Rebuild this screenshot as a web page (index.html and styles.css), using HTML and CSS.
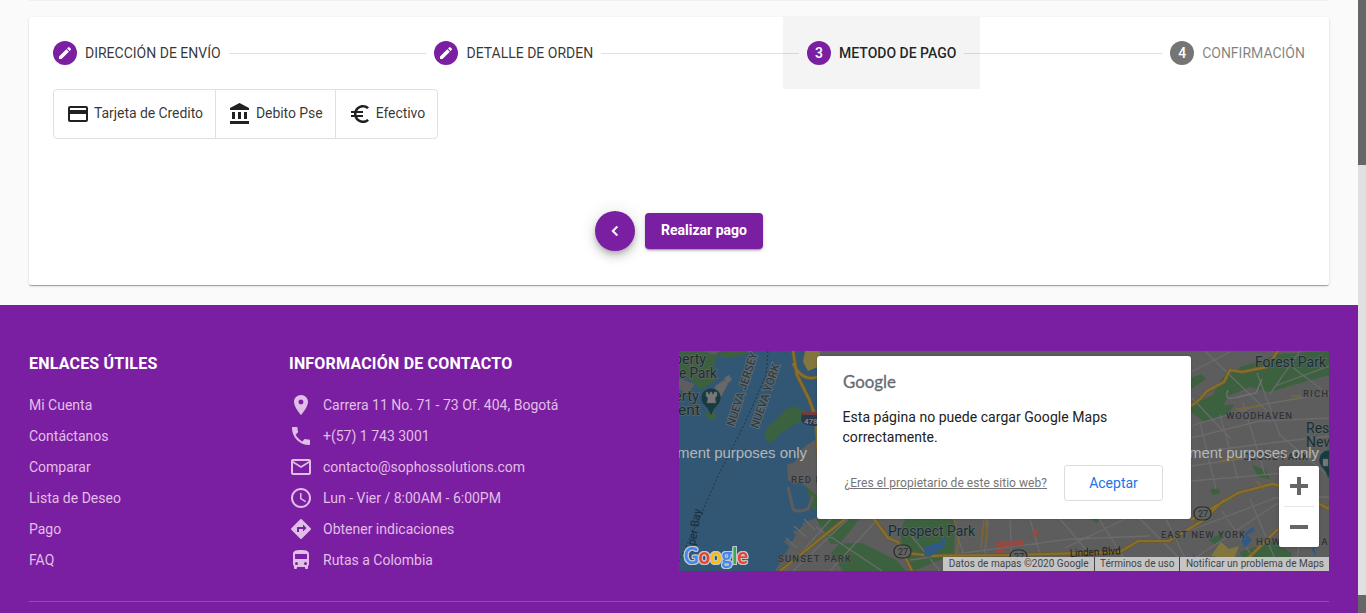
FILE: index.html
```html
<!DOCTYPE html>
<html lang="es">
<head>
<meta charset="utf-8">
<title>Metodo de pago</title>
<link rel="stylesheet" href="styles.css">
</head>
<body>
<div class="viewport">
  <div class="page">
    <div class="previous-card"></div>
    <main class="card">
      <div class="stepper">
        <div class="step"><span class="step-icon"><svg width="16" height="16" viewBox="0 0 24 24"><path d="M3 17.250V21h3.750L17.810 9.940l-3.750-3.750L3 17.250zM20.710 7.040a1 1 0 0 0 0-1.410l-2.340-2.340a1 1 0 0 0-1.410 0l-1.830 1.830 3.750 3.750 1.830-1.830z"/></svg></span><span class="step-label">DIRECCIÓN DE ENVÍO</span></div>
        <div class="step-line"></div>
        <div class="step"><span class="step-icon"><svg width="16" height="16" viewBox="0 0 24 24"><path d="M3 17.250V21h3.750L17.810 9.940l-3.750-3.750L3 17.250zM20.710 7.040a1 1 0 0 0 0-1.410l-2.340-2.340a1 1 0 0 0-1.410 0l-1.830 1.830 3.750 3.750 1.830-1.830z"/></svg></span><span class="step-label">DETALLE DE ORDEN</span></div>
        <div class="step-line"></div>
        <div class="step step-active"><span class="step-icon">3</span><span class="step-label">METODO DE PAGO</span></div>
        <div class="step-line"></div>
        <div class="step step-pending"><span class="step-icon">4</span><span class="step-label">CONFIRMACIÓN</span></div>
      </div>
      <div class="methods">
        <button class="method"><svg width="24" height="24" viewBox="0 0 24 24"><path d="M20 4H4c-1.110 0-1.990.89-1.990 2L2 18c0 1.110.89 2 2 2h16c1.110 0 2-.89 2-2V6c0-1.110-.89-2-2-2zm0 14H4v-6h16v6zm0-10H4V6h16v2z"/></svg><span>Tarjeta de Credito</span></button>
        <button class="method"><svg width="24" height="24" viewBox="0 0 24 24"><path d="M4 10v7h3v-7H4zm6 0v7h3v-7h-3zM2 22h19v-3H2v3zm14-12v7h3v-7h-3zm-4.500-9L2 6v2h19V6l-9.500-5z"/></svg><span>Debito Pse</span></button>
        <button class="method"><svg width="24" height="24" viewBox="0 0 24 24"><path d="M15 18.500c-2.510 0-4.680-1.420-5.760-3.500H15v-2H8.580c-.05-.33-.08-.66-.08-1s.03-.67.080-1H15V9H9.240A6.490 6.490 0 0 1 15 5.500c1.610 0 3.090.59 4.230 1.570L21 5.300A8.955 8.955 0 0 0 15 3c-3.920 0-7.240 2.510-8.480 6H3v2h3.060a8.262 8.262 0 0 0 0 2H3v2h3.520c1.240 3.490 4.560 6 8.480 6 2.310 0 4.410-.87 6-2.300l-1.780-1.770A6.412 6.412 0 0 1 15 18.500z"/></svg><span>Efectivo</span></button>
      </div>
      <div class="actions">
        <button class="fab" aria-label="Atrás"><svg width="24" height="24" viewBox="0 0 24 24"><path d="M15.410 7.410 14 6l-6 6 6 6 1.410-1.410L10.830 12z"/></svg></button>
        <button class="pay">Realizar pago</button>
      </div>
    </main>
    <footer class="footer">
      <div class="footer-columns">
        <section class="links">
          <h2 class="footer-title">ENLACES ÚTILES</h2>
          <a class="row">Mi Cuenta</a><a class="row">Contáctanos</a><a class="row">Comparar</a><a class="row">Lista de Deseo</a><a class="row">Pago</a><a class="row">FAQ</a>
        </section>
        <section class="contact">
          <h2 class="footer-title">INFORMACIÓN DE CONTACTO</h2>
          <div class="row"><svg width="24" height="24" viewBox="0 0 24 24"><path d="M12 2C8.130 2 5 5.130 5 9c0 5.250 7 13 7 13s7-7.750 7-13c0-3.870-3.130-7-7-7zm0 9.500a2.500 2.500 0 0 1 0-5 2.500 2.500 0 0 1 0 5z"/></svg><span>Carrera 11 No. 71 - 73 Of. 404, Bogotá</span></div>
          <div class="row"><svg width="24" height="24" viewBox="0 0 24 24"><path d="M6.620 10.790c1.440 2.830 3.760 5.140 6.590 6.590l2.200-2.200c.27-.27.670-.36 1.020-.24 1.120.37 2.330.57 3.570.57.550 0 1 .45 1 1V20c0 .55-.45 1-1 1C10.610 21 3 13.390 3 4c0-.55.450-1 1-1h3.500c.55 0 1 .45 1 1 0 1.250.2 2.450.57 3.570.11.350.03.740-.25 1.020l-2.200 2.200z"/></svg><span>+(57) 1 743 3001</span></div>
          <div class="row"><svg width="24" height="24" viewBox="0 0 24 24"><path d="M20 4H4c-1.100 0-1.990.9-1.990 2L2 18c0 1.100.9 2 2 2h16c1.100 0 2-.9 2-2V6c0-1.100-.9-2-2-2zm0 14H4V8l8 5 8-5v10zm-8-7L4 6h16l-8 5z"/></svg><span>contacto@sophossolutions.com</span></div>
          <div class="row"><svg width="24" height="24" viewBox="0 0 24 24"><path d="M11.990 2C6.470 2 2 6.480 2 12s4.470 10 9.990 10C17.520 22 22 17.520 22 12S17.520 2 11.990 2zM12 20a8 8 0 1 1 0-16 8 8 0 0 1 0 16zm.5-13H11v6l5.250 3.150.75-1.230-4.500-2.670z"/></svg><span>Lun - Vier / 8:00AM - 6:00PM</span></div>
          <div class="row"><svg width="24" height="24" viewBox="0 0 24 24"><path d="m21.710 11.290-9-9a.996.996 0 0 0-1.410 0l-9 9a.996.996 0 0 0 0 1.410l9 9c.39.39 1.020.39 1.410 0l9-9a.996.996 0 0 0 0-1.410zM14 14.500V12h-4v3H8v-4c0-.55.450-1 1-1h5V7.500l3.500 3.500-3.500 3.500z"/></svg><span>Obtener indicaciones</span></div>
          <div class="row"><svg width="24" height="24" viewBox="0 0 24 24"><path d="M4 16c0 .88.390 1.670 1 2.220V20c0 .55.450 1 1 1h1c.55 0 1-.45 1-1v-1h8v1c0 .55.450 1 1 1h1c.55 0 1-.45 1-1v-1.780c.61-.55 1-1.340 1-2.220V6c0-3.500-3.580-4-8-4s-8 .5-8 4v10zm3.500 1a1.500 1.500 0 1 1 0-3 1.500 1.500 0 0 1 0 3zm9 0a1.500 1.500 0 1 1 0-3 1.500 1.500 0 0 1 0 3zm1.500-6H6V6h12v5z"/></svg><span>Rutas a Colombia</span></div>
        </section>
        <section class="map">
          <svg class="map-canvas" width="650" height="220" viewBox="679 351 650 220">
            <rect x="679" y="351" width="650" height="220" fill="#5d5d5d"/>
            <path class="water" d="M679 351H818V438L808 444 802 449 795 462 787 465 788 480 793 484 800 481 808 490 813 497 818 494V517L806 522 797 532 791 544 783 557 775 571H679z"/>
            <g class="park">
              <path d="M679 351H720L714 364 717 379 701 390 688 378 679 377zM720 351H752L742 356 721 358zM765 436C762 429 775 422 784 411Q794 401 807 413L800 422Q784 429 774 440 768 447 765 436zM704 413l9-2 4 6-6 4zM806 486l13 12v12h-7z"/>
              <path d="M859 519H816L831 544 862 543 896 560 906 571H843L831 553 847 535zM905 519H955L954 554 914 571 903 550 900 533zM921 510h52v9H915z"/>
              <path d="M1191 405 1213 395 1222 378 1241 367 1262 360 1278 354 1329 351V375L1300 383 1270 392 1250 387 1228 396 1223 406 1234 404 1228 415 1203 421 1191 412zM1191 378l10-4 5 5-15 10zM1252 465l14 5 4 9-12-2zM1210 490l8-3 2 6-7 2zM1240 552l32-10 20 11-3 8-46 1zM1090 519l10 0-3 4zM1208 540l12-6 4 4-8 7z"/>
            </g>
            <path fill="#5d5d5d" d="M679 378l16 6-7 10-9-5zM704 351l10 4 6-4z"/>
            <g class="streets">
              <path d="M816 527 882 571M831 519 785 571M848 519 793 571M875 522 830 571M905 528 940 571M955 530l15 41M988 519l-5 52M1010 519l2 52M1030 519l15 52M910 560 1070 539 1150 536M1060 519l41 48M1065 548l60-29M1099 519l33 52M1140 519l52 52M1166 519l24 49M1191 426 1260 405 1329 393M1191 438 1260 421 1329 418M1191 453 1270 443 1329 436M1191 466 1275 454 1329 452M1191 481 1284 473M1200 422 1216 489M1220 415 1238 479M1243 403 1265 475M1257 373 1280 435 1325 473M1283 360 1329 395M1191 397 1231 439M1275 386 1329 366M1191 530 1275 498 1329 497M1222 511 1262 571M1250 499 1280 571M1192 560 1278 503M1307 497l-12 74"/>
              <path d="M786 538l11 10M794 526l12 11M804 519l11 11M1191 372 1230 352M1205 351l67 65M1300 351l-30 43"/>
            </g>
            <path class="trail" d="M1228 390Q1223 402 1238 397L1256 393 1262 379"/>
            <g class="road-edge"><path d="M793 351 797 375 809 399 816 418 818 455M793 363Q801 382 818 377M874 519 888 538 898 542 912 571M845 519 780 571M900 552Q913 554 934 556 950 555 1008 555L1120 552 1138 541 1169 541 1202 521 1224 500M1191 406 1200 399 1207 391 1224 382 1230 370 1242 372 1267 367 1278 351M1191 520 1221 503 1238 493 1272 484 1290 488 1329 509M1235 571 1278 529"/></g>
            <g class="road"><path d="M793 351 797 375 809 399 816 418 818 455M793 363Q801 382 818 377M874 519 888 538 898 542 912 571M845 519 780 571M900 552Q913 554 934 556 950 555 1008 555L1120 552 1138 541 1169 541 1202 521 1224 500M1191 406 1200 399 1207 391 1224 382 1230 370 1242 372 1267 367 1278 351M1191 520 1221 503 1238 493 1272 484 1290 488 1329 509M1235 571 1278 529"/></g>
            <path class="minor-road" d="M1236 409l25-3M1220 461l26-5M954 519l5 20-5 30M984 519l-3 30M986 519l1 22M1257 481l6 8M1291 396l10 0"/>
            <path class="land-detail" d="M788 487 793 509Q796 513 808 509L813 496"/>
            <path class="piers" d="M785 541l9 7M794 531l11 9M803 523l9 8"/>
            <path fill="#82763d" d="M805 351h15v15l-12 5-5-9zM1211 556l10-14 8 7 10-3-5 13z"/>
            <path fill="#305a83" d="M925 546l16-4 3-6 2 8-7 7-10 6-5-1zM1192 552l6 10 2 7-3 2zM1241 541l5-9 7-5 2 4-8 4 5 5-7 8zM1312 550l2-7 2 15z"/>
            <g fill="#944943"><path d="M996 542l28-2v5l-28 3zM996 549l10 0v4h-10zM1033 530l5-1-1 8-3-1z"/></g>
            <path class="ferry" d="M768 351 766 375 744 425 718 476 698 521 679 561"/>
            <path fill="#686868" d="M715 386l9-6 4 4-7 13-6-3zM724 378l5-3 3 5-5 4z"/>
            <g class="label"><text x="674" y="364" textLength="32" lengthAdjust="spacingAndGlyphs">perty</text><text x="679" y="378" textLength="38" lengthAdjust="spacingAndGlyphs">e Park</text><text x="674" y="401" textLength="25" lengthAdjust="spacingAndGlyphs">erty</text><text x="678" y="415" textLength="22" lengthAdjust="spacingAndGlyphs">ent</text><text x="888" y="536" textLength="87" lengthAdjust="spacingAndGlyphs">Prospect Park</text><text x="1255" y="367" textLength="71" lengthAdjust="spacingAndGlyphs">Forest Park</text><text x="1306" y="433">Res</text><text x="1306" y="447">New</text></g>
            <g class="area"><text x="791" y="483" textLength="39">RED HO</text><text x="778" y="562" textLength="73">SUNSET PARK</text><text x="1226" y="419" textLength="66">WOODHAVEN</text><text x="1303" y="397" textLength="25">RICH</text><text x="1243" y="460" textLength="65">OZONE PARK</text><text x="1161" y="538" textLength="84">EAST NEW YORK</text><text x="1256" y="545" textLength="79">HOWARD BEAC</text></g>
            <g class="border-label"><text transform="translate(734 427) rotate(-72)" textLength="77" lengthAdjust="spacingAndGlyphs">NUEVA JERSEY</text><text transform="translate(758 429) rotate(-71)" textLength="67" lengthAdjust="spacingAndGlyphs">NUEVA YORK</text></g>
            <text class="bay-label" transform="translate(694 552) rotate(-80)" textLength="43" lengthAdjust="spacingAndGlyphs">pper Bay</text>
            <text class="street-label" x="1070" y="557" transform="rotate(-3 1070 557)" textLength="51" lengthAdjust="spacingAndGlyphs">Linden Blvd</text>
            <g class="pin"><path d="M711 416Q708 408 703 404A10 10 0 1 1 719 404Q714 408 711 416z"/><path d="M1328 478Q1326 471 1321 466A10 10 0 1 1 1337 466z"/><path fill="#777" d="M706 392v4l2 2-1 5h9l-1-5 2-2v-4h-3v2h-2v-2h-2v2h-2v-2z"/><path fill="#777" d="M1323 459h5v7h-5z"/></g>
            <g class="shield"><path d="M802 413h16v12l-2 1q-14 0-15-7z" fill="#29394b"/><path d="M802 412h16v3h-15z" fill="#743c3b"/><text x="804" y="424">478</text></g>
            <g class="route"><rect x="894" y="545" width="17" height="13" rx="6.500"/><text x="898" y="555">27</text><rect x="1010" y="550" width="17" height="13" rx="6.500"/><text x="1014" y="560">27</text><rect x="1194" y="507" width="17" height="13" rx="6.500"/><text x="1198" y="517">27</text></g>
            <g class="watermark"><text x="677" y="458" textLength="130">ment purposes only</text><text x="1189" y="458" textLength="130">ment purposes only</text></g>
            <text class="google-logo google-halo" x="684" y="564" textLength="64" lengthAdjust="spacingAndGlyphs" aria-hidden="true"><tspan fill="#4285f4">G</tspan><tspan fill="#ea4335">o</tspan><tspan fill="#fbbc05">o</tspan><tspan fill="#4285f4">g</tspan><tspan fill="#34a853">l</tspan><tspan fill="#ea4335">e</tspan></text>
          </svg>
          <div class="zoom"><button aria-label="Acercar"><svg width="18" height="18" viewBox="0 0 18 18"><path d="M7 0h4v7h7v4h-7v7H7v-7H0V7h7z"/></svg></button><span class="zoom-divider"></span><button aria-label="Alejar"><svg width="18" height="18" viewBox="0 0 18 18"><path d="M0 7h18v4H0z"/></svg></button></div>
          <div class="credits"><span>Datos de mapas ©2020 Google</span><span>Términos de uso</span><span>Notificar un problema de Maps</span></div>
          <div class="dialog">
            <svg class="dialog-logo" width="54" height="20" viewBox="0 0 54 20"><text x="0" y="12" textLength="53" lengthAdjust="spacingAndGlyphs">Google</text></svg>
            <p class="dialog-text">Esta página no puede cargar Google Maps correctamente.</p>
            <div class="dialog-actions"><a class="owner">¿Eres el propietario de este sitio web?</a><button class="accept">Aceptar</button></div>
          </div>
        </section>
      </div>
      <div class="footer-divider"></div>
    </footer>
  </div>
  <div class="scrollbar"><div class="scroll-thumb"></div><div class="scroll-corner"></div></div>
</div>
</body>
</html>
```
FILE: styles.css
```css
* { box-sizing: border-box; }
body { margin: 0; font-family: Roboto, "Liberation Sans", sans-serif; font-size: 14px; color: rgba(0,0,0,.87); background: #fafafa; }
button { font: inherit; border: 0; padding: 0; background: none; color: inherit; }
.viewport { display: flex; height: 613px; overflow: hidden; }
.page { flex: 1; display: flex; flex-direction: column; min-width: 0; }
.scrollbar { width: 8px; background: #e0e0e0; display: flex; flex-direction: column; justify-content: space-between; }
.scroll-thumb { height: 165px; background: #666; }
.scroll-corner { height: 18px; background: #666; }
.previous-card { height: 1px; flex: none; margin: 0 29px 16px; background: #f0f0f0; }
.card { height: 268px; flex: none; margin: 0 29px; background: #fff; border-radius: 2px; box-shadow: 0 2px 1px -1px rgba(0,0,0,.2), 0 1px 1px rgba(0,0,0,.14), 0 1px 3px rgba(0,0,0,.12); }
.stepper { display: flex; align-items: center; height: 72px; }
.step { display: flex; align-items: center; height: 72px; padding: 0 24px; gap: 8px; white-space: nowrap; }
.step-icon { width: 24px; height: 24px; border-radius: 50%; background: #7b1fa2; color: #fff; display: flex; align-items: center; justify-content: center; font-weight: 500; }
.step-icon svg, .fab svg { fill: #fff; }
.fab svg { stroke: #fff; stroke-width: .6; }
.step-line { flex: 1; height: 1px; margin: 0 -16px; background: rgba(0,0,0,.12); z-index: 1; }
.step-label { color: rgba(0,0,0,.8); }
.step-active { background: #f4f4f4; }
.step-active .step-label { font-weight: 500; color: rgba(0,0,0,.87); }
.step-pending .step-icon { background: #757575; }
.step-pending .step-label { color: rgba(0,0,0,.5); }
.methods { display: inline-flex; height: 50px; margin-left: 24px; border: 1px solid #e0e0e0; border-radius: 4px; }
.method { display: flex; align-items: center; gap: 4px; padding: 0 12px; font-size: 14px; letter-spacing: -.06px; color: rgba(0,0,0,.8); }
.method span { padding-bottom: 2px; }
.method + .method { border-left: 1px solid #e0e0e0; }
.method svg { fill: #212121; }
.actions { display: flex; align-items: center; justify-content: center; gap: 10px; margin-top: 72px; }
.fab { display: flex; align-items: center; justify-content: center; width: 40px; height: 40px; border-radius: 50%; background: #7b1fa2; box-shadow: 0 3px 5px -1px rgba(0,0,0,.2), 0 6px 10px rgba(0,0,0,.14), 0 1px 18px rgba(0,0,0,.12); }
.fab svg { width: 20px; height: 20px; }
.pay { width: 118px; height: 36px; padding-bottom: 2px; border-radius: 4px; background: #7b1fa2; color: #fff; font-weight: 700; box-shadow: 0 3px 1px -2px rgba(0,0,0,.2), 0 2px 2px rgba(0,0,0,.14), 0 1px 5px rgba(0,0,0,.12); }
.footer { flex: 1; margin-top: 20px; padding: 46px 29px 0; background: #7b1fa2; }
.footer-columns { display: grid; grid-template-columns: 260px 390px 650px; height: 250px; }
.footer-title { margin: 0; padding-top: 2px; height: 38px; font-size: 16px; line-height: 22px; font-weight: 700; letter-spacing: .2px; color: #fff; }
.row { display: flex; align-items: center; gap: 10px; height: 31px; color: #e1bee7; white-space: nowrap; }
.row svg { fill: #e1bee7; }
.footer-divider { height: 1px; background: rgba(255,255,255,.2); }
.map { position: relative; height: 220px; }
.map-canvas { display: block; }
.water { fill: #315774; }
.park { fill: #3c613f; }
.streets { fill: none; stroke: #6b6b6b; stroke-width: 1.3; }
.trail { fill: none; stroke: #747474; stroke-width: 1.3; }
.road-edge { fill: none; stroke: #655a38; stroke-width: 4; }
.road { fill: none; stroke: #8a6f28; stroke-width: 2.2; }
.minor-road { fill: none; stroke: #7c682f; stroke-width: 1.4; }
.land-detail, .piers { fill: none; stroke: #5d5d5d; stroke-width: 3; }
.ferry { fill: none; stroke: #26343e; stroke-dasharray: 2 2; }
.label { font-size: 14px; fill: #172e34; stroke: #606664; stroke-width: 1.5px; paint-order: stroke; }
.area { font-size: 9.500px; font-weight: 500; fill: #2f3337; stroke: #626262; stroke-width: 1px; paint-order: stroke; }
.border-label { font-size: 11.500px; font-weight: 500; fill: #323b41; stroke: #5f6b72; stroke-width: 2px; paint-order: stroke; }
.bay-label { font-size: 11.500px; fill: #182c3a; }
.street-label { font-size: 11px; fill: #1e1e1e; }
.pin { fill: #173b40; stroke: #5a696b; stroke-width: .4; }
.shield { font-size: 8px; fill: #999; }
.route { font-size: 9px; fill: #252a2a; }
.route rect { fill: #606260; stroke: #252a2a; stroke-width: 1.2; }
.watermark { font-family: "Liberation Sans", sans-serif; font-size: 15px; fill: #b4b6b8; }
.google-logo { font-family: Lato, sans-serif; font-size: 22px; font-weight: 700; }
.google-halo { filter: drop-shadow(1px 0 0 #c1c8cc) drop-shadow(-1px 0 0 #c1c8cc) drop-shadow(0 1px 0 #c1c8cc) drop-shadow(0 -1px 0 #c1c8cc); }
.zoom { position: absolute; right: 10px; top: 115px; width: 40px; height: 81px; border-radius: 2px; background: #fff; display: flex; flex-direction: column; align-items: center; box-shadow: 0 1px 4px -1px rgba(0,0,0,.3); }
.zoom button { width: 40px; height: 40px; display: flex; align-items: center; justify-content: center; }
.zoom svg { fill: #666; }
.zoom-divider { width: 30px; height: 1px; background: #e6e6e6; }
.credits { position: absolute; right: 0; bottom: 0; height: 14px; display: flex; background: rgba(220,220,220,.82); font-size: 10px; letter-spacing: .02px; line-height: 14px; color: #444; white-space: nowrap; }
.credits span { padding: 0 5px 0 5.500px; }
.credits span + span { border-left: 1px solid #444; }
.dialog { position: absolute; left: 138px; top: 5px; width: 374px; height: 163px; padding: 20px 28px 18px 25.500px; border-radius: 3px; background: #fff; box-shadow: 0 0 2px rgba(0,0,0,.3); }
.dialog-logo { display: block; overflow: visible; font-family: Lato, sans-serif; font-size: 17px; fill: #666a70; stroke: #666a70; stroke-width: .3px; }
.dialog-text { margin: 11px 0 18px; width: 290px; font-size: 14px; letter-spacing: .04px; line-height: 20px; color: #212121; }
.dialog-actions { display: flex; align-items: center; justify-content: space-between; }
.owner { padding-left: 2px; font-size: 12px; letter-spacing: .05px; color: #757575; text-decoration: underline; white-space: nowrap; }
.accept { width: 99px; height: 36px; border: 1px solid #dadce0; border-radius: 3px; color: #1a73e8; font-size: 14px; }
```
